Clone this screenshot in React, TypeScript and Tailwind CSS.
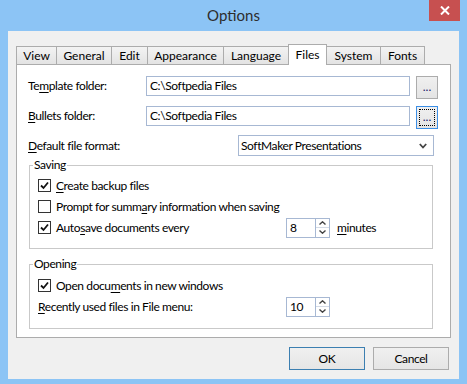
import type { ReactNode } from 'react';

const tabs = [
  { label: 'View', w: 41 },
  { label: 'General', w: 56 },
  { label: 'Edit', w: 37 },
  { label: 'Appearance', w: 77 },
  { label: 'Language', w: 66 },
  { label: 'Files', w: 39, active: true },
  { label: 'System', w: 55 },
  { label: 'Fonts', w: 45 },
];

function Key({ children }: { children: ReactNode }) {
  return <span className="underline underline-offset-[2px] decoration-1">{children}</span>;
}

function CheckBox({ checked }: { checked?: boolean }) {
  return (
    <span className="w-[13px] h-[13px] shrink-0 border border-[#333] bg-white flex items-center justify-center">
      {checked && (
        <svg width="9" height="9" viewBox="0 0 9 9">
          <path d="M1 4.5 L3.5 7 L8 1.5" fill="none" stroke="#111" strokeWidth="1.8" />
        </svg>
      )}
    </span>
  );
}

function Spinner({ value }: { value: string }) {
  return (
    <div className="flex w-[44px] h-[20px] border border-[#a7b8d3] bg-white">
      <div className="flex-1 pl-[3px] leading-[18px]">{value}</div>
      <div className="w-[14px] flex flex-col border-l border-[#a7b8d3]">
        <div className="flex-1 flex items-center justify-center border-b border-[#d4dbe6]">
          <svg width="7" height="4" viewBox="0 0 7 4">
            <path d="M0.5 3.5 L3.5 0.8 L6.5 3.5" fill="none" stroke="#444" strokeWidth="1.4" />
          </svg>
        </div>
        <div className="flex-1 flex items-center justify-center">
          <svg width="7" height="4" viewBox="0 0 7 4">
            <path d="M0.5 0.5 L3.5 3.2 L6.5 0.5" fill="none" stroke="#444" strokeWidth="1.4" />
          </svg>
        </div>
      </div>
    </div>
  );
}

function Group({ title, className, children }: { title: string; className: string; children: ReactNode }) {
  return (
    <div className={`relative ml-[12px] w-[404px] border border-[#c9c9c9] ${className}`}>
      <span className="absolute -top-[9px] left-[3px] px-px bg-white leading-[16px]">{title}</span>
      {children}
    </div>
  );
}

function FolderRow({ label, focused }: { label: ReactNode; focused?: boolean }) {
  return (
    <div className="flex items-start">
      <div className="w-[118px] leading-[20px]">{label}</div>
      <div className="w-[264px] h-[20px] border border-[#a7b8d3] bg-white pl-[3px] leading-[18px]">
        C:\Softpedia Files
      </div>
      <div
        className={`ml-[6px] w-[22px] h-[23px] border bg-gradient-to-b from-[#f0f0f0] to-[#e4e4e4] flex items-center justify-center ${
          focused ? 'border-[#3c8fe6]' : 'border-[#acacac]'
        }`}
      >
        <div
          className={`w-[16px] h-[17px] flex items-center justify-center ${
            focused ? 'border border-dotted border-black' : ''
          }`}
        >
          <span className="text-[#1a1a6e] leading-none pb-[2px] tracking-normal">...</span>
        </div>
      </div>
    </div>
  );
}

export default function App() {
  return (
    <div className="w-[467px] h-[384px] bg-[#8cc4f5] font-['Lato','Noto_Sans',sans-serif] text-[12px] tracking-[-0.4px] text-black relative overflow-hidden">
      <div className="h-[31px] flex items-center justify-center text-[15px] tracking-normal text-[#2d2d2d] pb-[1px]">Options</div>
      <div className="absolute top-0 right-[7px] w-[31px] h-[21px] bg-[#c75050] flex items-center justify-center">
        <svg width="10" height="9" viewBox="0 0 10 9">
          <path d="M1 0.5 L9 8.5 M9 0.5 L1 8.5" stroke="#fff" strokeWidth="2" />
        </svg>
      </div>

      <div className="mx-[8px] h-[348px] bg-[#f0f0f0] pt-[13px]">
        {/* tabs */}
        <div className="relative z-10 ml-[8px] h-[21px] -mb-px flex items-end tracking-normal">
          {tabs.map((t, i) =>
            t.active ? (
              <div
                key={t.label}
                style={{ width: t.w }}
                className={`h-[21px] ${i ? '-ml-px' : ''} border border-b-0 border-[#acacac] bg-white flex items-center justify-center pb-[1px]`}
              >
                {t.label}
              </div>
            ) : (
              <div
                key={t.label}
                style={{ width: t.w }}
                className={`h-[18px] mb-px ${i ? '-ml-px' : ''} border border-b-0 border-[#acacac] bg-gradient-to-b from-[#f3f3f3] to-[#e3e3e3] flex items-center justify-center`}
              >
                {t.label}
              </div>
            ),
          )}
        </div>

        {/* panel */}
        <div className="ml-[8px] w-[435px] h-[274px] border border-[#acacac] bg-white pt-[11px]">
          <div className="pl-[11px] flex flex-col gap-[7px]">
            <FolderRow label={<>Te<Key>m</Key>plate folder:</>} />
            <FolderRow label={<><Key>B</Key>ullets folder:</>} focused />
          </div>
          <div className="pl-[11px] mt-[6px] flex items-center">
            <div className="w-[210px]">
              <Key>D</Key>efault file format:
            </div>
            <div className="w-[196px] h-[21px] border border-[#a7b8d3] bg-white pl-[2px] pr-[6px] flex items-center justify-between">
              <span>SoftMaker Presentations</span>
              <svg width="8" height="6" viewBox="0 0 8 6">
                <path d="M0.8 1 L4 4.5 L7.2 1" fill="none" stroke="#444" strokeWidth="1.8" />
              </svg>
            </div>
          </div>

          <Group title="Saving" className="mt-[9px] h-[84px] pt-[9px] pl-[8px]">
            <div className="h-[21px] flex items-center">
              <CheckBox checked />
              <span className="ml-[5px]"><Key>C</Key>reate backup files</span>
            </div>
            <div className="h-[21px] flex items-center">
              <CheckBox />
              <span className="ml-[5px]">Prompt for summ<Key>a</Key>ry information when saving</span>
            </div>
            <div className="h-[21px] flex items-center">
              <div className="w-[248px] flex items-center">
                <CheckBox checked />
                <span className="ml-[5px]">Auto<Key>s</Key>ave documents every</span>
              </div>
              <Spinner value="8" />
              <span className="ml-[7px]"><Key>m</Key>inutes</span>
            </div>
          </Group>

          <Group title="Opening" className="mt-[15px] h-[65px] pt-[10px] pl-[8px]">
            <div className="h-[21px] flex items-center">
              <CheckBox checked />
              <span className="ml-[5px]">Open docu<Key>m</Key>ents in new windows</span>
            </div>
            <div className="h-[21px] flex items-center">
              <div className="w-[248px]">
                <Key>R</Key>ecently used files in File menu:
              </div>
              <Spinner value="10" />
            </div>
          </Group>
        </div>

        {/* buttons */}
        <div className="mt-[9px] mr-[10px] flex justify-end gap-[8px]">
          <div className="w-[76px] h-[23px] border border-[#3c7fb1] bg-gradient-to-b from-[#f0f0f0] to-[#e5e5e5] flex items-center justify-center">
            OK
          </div>
          <div className="w-[76px] h-[23px] border border-[#acacac] bg-gradient-to-b from-[#f0f0f0] to-[#e5e5e5] flex items-center justify-center">
            Cancel
          </div>
        </div>
      </div>
    </div>
  );
}
